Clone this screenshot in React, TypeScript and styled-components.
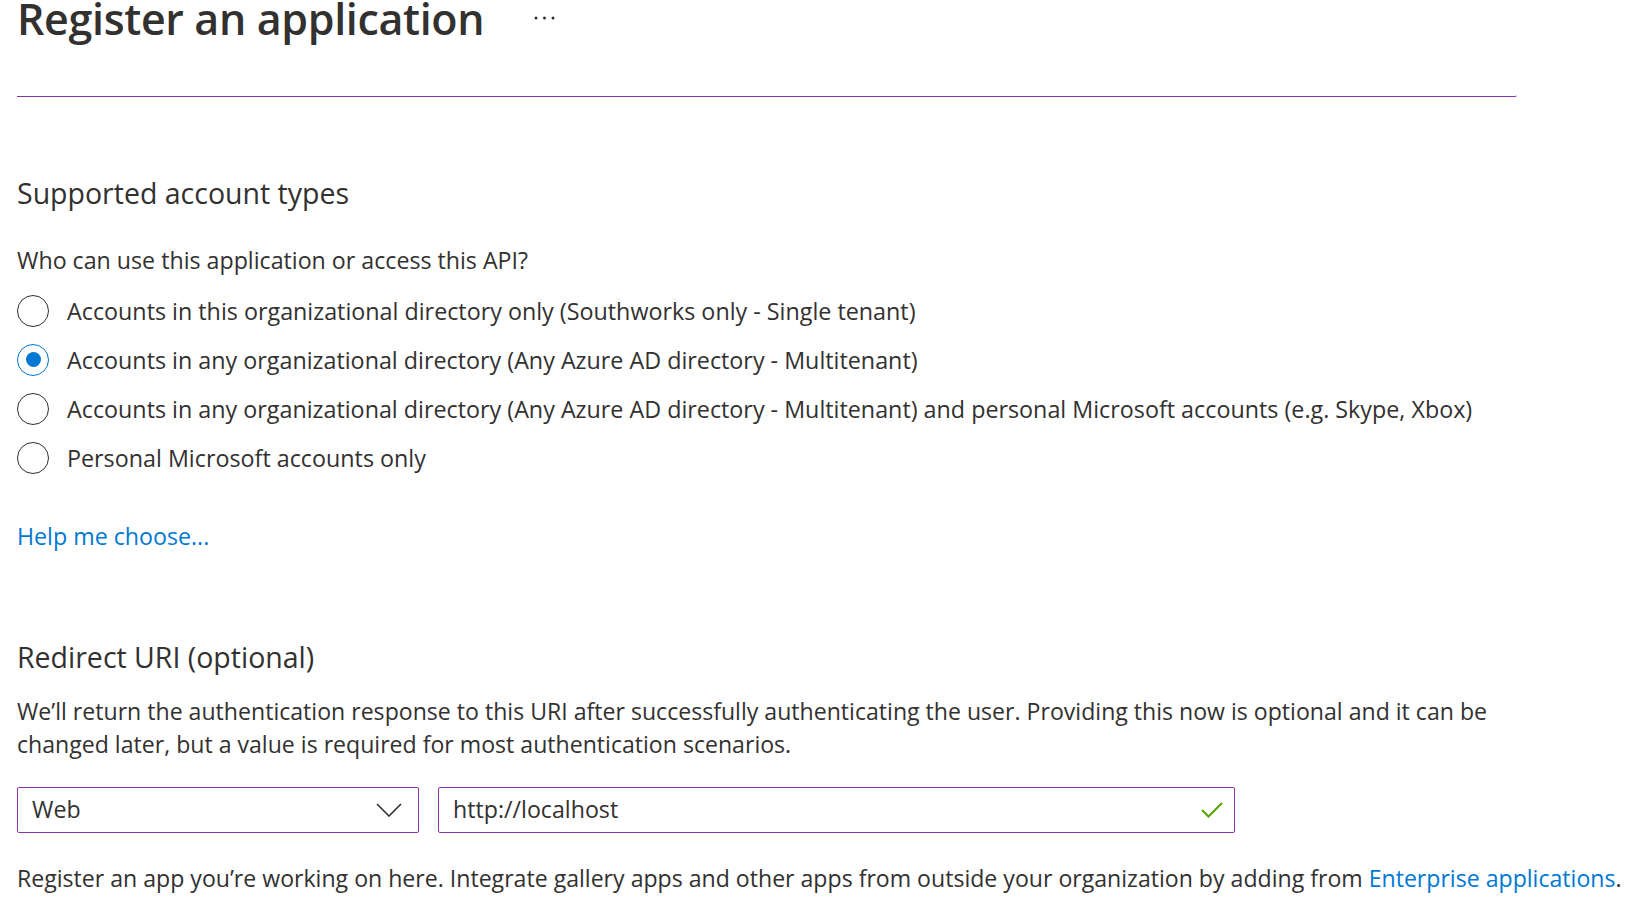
import React from "react";
import styled, { createGlobalStyle } from "styled-components";

const GlobalStyle = createGlobalStyle`
  html, body {
    margin: 0;
    padding: 0;
    background: #ffffff;
  }
  body {
    font-family: "Open Sans", "Noto Sans", Arial, sans-serif;
    color: #323130;
    -webkit-font-smoothing: antialiased;
  }
`;

const Page = styled.main`
  display: flex;
  flex-direction: column;
  padding: 0 0 0 17px;
  width: 1623px;
  box-sizing: border-box;
`;

const Header = styled.header`
  display: flex;
  align-items: center;
  gap: 49px;
  height: 40px;
  margin-top: -1px;
`;

const Title = styled.h1`
  margin: 0;
  font-size: 43px;
  line-height: 44px;
  font-weight: 600;
  color: #323130;
  letter-spacing: -0.35px;
`;

const MoreButton = styled.button`
  display: flex;
  align-items: center;
  justify-content: center;
  border: none;
  background: transparent;
  padding: 0;
  width: 24px;
  height: 20px;
  margin-top: -2px;
  cursor: pointer;
`;

const FieldEdge = styled.div`
  width: 1500px;
  height: 58px;
  border-bottom: 1px solid #8c35a8;
  border-bottom-right-radius: 2px;
  box-sizing: border-box;
`;

const SectionTitle = styled.h2<{ $gap: number }>`
  margin: ${(p) => p.$gap}px 0 0 0;
  font-size: 28.5px;
  line-height: 36px;
  font-weight: 400;
  color: #323130;
`;

const Question = styled.p`
  margin: 33px 0 0 0;
  font-size: 23.2px;
  line-height: 32px;
`;

const RadioGroup = styled.div`
  display: flex;
  flex-direction: column;
  margin-top: 10px;
`;

const RadioRow = styled.label`
  display: flex;
  align-items: center;
  gap: 18px;
  height: 49px;
  font-size: 23.3px;
  cursor: pointer;
`;

const RadioCircle = styled.span<{ $checked: boolean }>`
  display: flex;
  align-items: center;
  justify-content: center;
  flex: none;
  width: 32px;
  height: 32px;
  border-radius: 50%;
  box-sizing: border-box;
  border: 1px solid ${(p) => (p.$checked ? "#0078d4" : "#323130")};
  &::after {
    content: "";
    display: ${(p) => (p.$checked ? "block" : "none")};
    width: 15px;
    height: 15px;
    border-radius: 50%;
    background: #0078d4;
  }
`;

const Link = styled.a`
  color: #0078d4;
  text-decoration: none;
  cursor: pointer;
`;

const HelpLine = styled.p`
  margin: 38px 0 0 0;
  font-size: 23.2px;
  line-height: 32px;
`;

const Paragraph = styled.p`
  margin: 20px 0 0 0;
  font-size: 23.1px;
  line-height: 33px;
  max-width: 1530px;
`;

const InputsRow = styled.div`
  display: flex;
  gap: 19px;
  margin-top: 26px;
`;

const FieldBox = styled.div<{ $width: number; $pad: number }>`
  display: flex;
  align-items: center;
  justify-content: space-between;
  box-sizing: border-box;
  width: ${(p) => p.$width}px;
  height: 46px;
  border: 1px solid #8c35a8;
  border-radius: 2px;
  padding: 0 ${(p) => p.$pad}px 0 14px;
  font-size: 23.2px;
  color: #323130;
`;

const FieldText = styled.span`
  line-height: 1;
`;

const Footer = styled.p`
  margin: 29px 0 0 0;
  font-size: 23.1px;
  line-height: 32px;
  white-space: nowrap;
`;

const options = [
  "Accounts in this organizational directory only (Southworks only - Single tenant)",
  "Accounts in any organizational directory (Any Azure AD directory - Multitenant)",
  "Accounts in any organizational directory (Any Azure AD directory - Multitenant) and personal Microsoft accounts (e.g. Skype, Xbox)",
  "Personal Microsoft accounts only",
];

export default function App() {
  const selected = 1;
  return (
    <>
      <GlobalStyle />
      <Page>
        <Header>
          <Title>Register an application</Title>
          <MoreButton aria-label="More">
            <svg width="22" height="6" viewBox="0 0 22 6">
              <circle cx="2" cy="3" r="1.5" fill="#323130" />
              <circle cx="10.5" cy="3" r="1.5" fill="#323130" />
              <circle cx="19" cy="3" r="1.5" fill="#323130" />
            </svg>
          </MoreButton>
        </Header>
        <FieldEdge />

        <SectionTitle $gap={78}>Supported account types</SectionTitle>
        <Question>Who can use this application or access this API?</Question>
        <RadioGroup role="radiogroup">
          {options.map((o, i) => (
            <RadioRow key={i}>
              <RadioCircle $checked={i === selected} />
              <span>{o}</span>
            </RadioRow>
          ))}
        </RadioGroup>
        <HelpLine>
          <Link>Help me choose...</Link>
        </HelpLine>

        <SectionTitle $gap={87}>Redirect URI (optional)</SectionTitle>
        <Paragraph>
          We’ll return the authentication response to this URI after successfully authenticating the user. Providing
          this now is optional and it can be changed later, but a value is required for most authentication scenarios.
        </Paragraph>
        <InputsRow>
          <FieldBox $width={402} $pad={16}>
            <FieldText>Web</FieldText>
            <svg width="26" height="14" viewBox="0 0 26 14">
              <polyline points="1,1 13,13 25,1" fill="none" stroke="#323130" strokeWidth="1.6" />
            </svg>
          </FieldBox>
          <FieldBox $width={797} $pad={11}>
            <FieldText>http://localhost</FieldText>
            <svg width="22" height="16" viewBox="0 0 22 16">
              <polyline points="1,8 7.5,14.5 21,1" fill="none" stroke="#57a300" strokeWidth="2" />
            </svg>
          </FieldBox>
        </InputsRow>
        <Footer>
          Register an app you’re working on here. Integrate gallery apps and other apps from outside your organization
          by adding from <Link>Enterprise applications</Link>.
        </Footer>
      </Page>
    </>
  );
}
